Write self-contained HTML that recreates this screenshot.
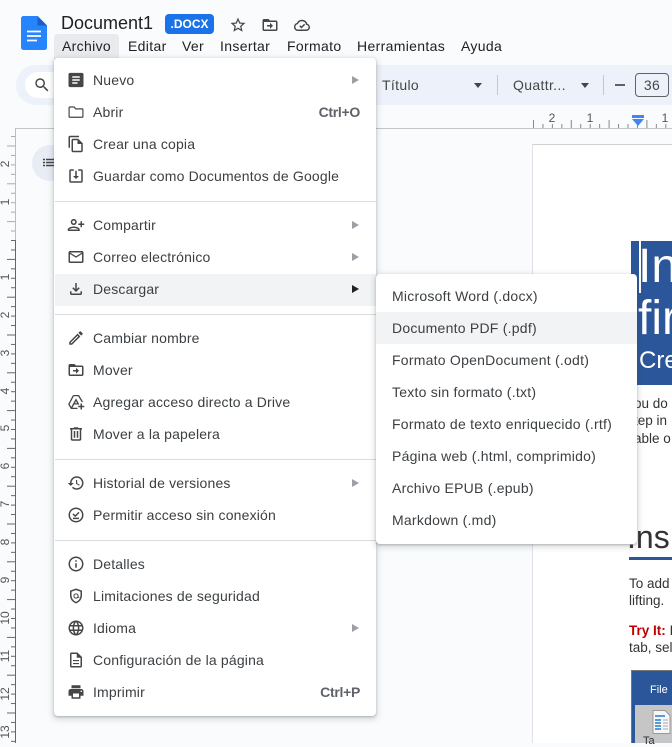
<!DOCTYPE html>
<html><head><meta charset="utf-8"><style>
html,body{margin:0;padding:0}
body{width:672px;height:743px;overflow:hidden;position:relative;background:#f9fbfd;font-family:"Liberation Sans",sans-serif;color:#3c4043}
.a{position:absolute;white-space:nowrap}
.b{position:absolute;white-space:nowrap;font-size:14px;line-height:20px;letter-spacing:.34px;color:#202124}
.t{position:absolute;left:93px;white-space:nowrap;font-size:14px;line-height:20px;letter-spacing:.17px;color:#3c4043}
.s{position:absolute;left:392px;white-space:nowrap;font-size:14px;line-height:20px;letter-spacing:.24px;color:#3c4043}
.i{position:absolute;left:67px;width:18px;height:18px;fill:#444746}
.st{fill:none;stroke:#444746;stroke-width:2}
.d{position:absolute;left:55px;width:321px;height:1px;background:#dadce0}
.r{position:absolute;left:352px;width:0;height:0;border-left:7px solid #9aa0a6;border-top:4px solid transparent;border-bottom:4px solid transparent}
.k{position:absolute;right:312px;font-size:14px;line-height:20px;font-weight:bold;color:#5f6368;letter-spacing:-.3px}
.w{position:absolute;white-space:nowrap;color:#333;font-size:13.5px;line-height:17px}
</style></head><body>

<!-- doc page -->
<div class="a" style="left:532px;top:144px;width:140px;height:599px;background:#fff;border-left:1px solid #e0e2e6;border-top:1px solid #d0d0d0;box-sizing:border-box"></div>
<div class="a" style="left:631px;top:241px;width:41px;height:144px;background:#2b579a"></div>
<div class="a" style="left:639px;top:241px;width:2px;height:52px;background:#fff"></div>
<div class="a" style="left:638px;top:239px;color:#fff;font-size:48px;line-height:56px">In</div>
<div class="a" style="left:638px;top:291px;color:#fff;font-size:48px;line-height:56px">fir</div>
<div class="a" style="left:639px;top:346px;color:#fff;font-size:24px;line-height:30px">Cre</div>
<div class="w" style="left:634px;top:395px">ou do</div>
<div class="w" style="left:634px;top:412px">tep in</div>
<div class="w" style="left:634px;top:430px">able o</div>
<div class="a" style="left:627px;top:517px;font-size:32px;line-height:40px;color:#333">.ns</div>
<div class="a" style="left:629px;top:557px;width:43px;height:3px;background:#2b579a"></div>
<div class="w" style="left:629px;top:575px">To add</div>
<div class="w" style="left:629px;top:592px">lifting.</div>
<div class="w" style="left:629px;top:622px;color:#c00000;font-weight:bold">Try It: <span style="color:#333;font-weight:normal">I</span></div>
<div class="w" style="left:629px;top:639px">tab, sel</div>
<div class="a" style="left:631px;top:670px;width:41px;height:73px;background:#2b579a;border-left:1px solid #777;border-top:1px solid #777;box-sizing:border-box"></div>
<div class="a" style="left:650px;top:684px;color:#fff;font-size:11px;line-height:12px">File</div>
<div class="a" style="left:635px;top:705px;width:37px;height:38px;background:#c6c6c6"></div>
<svg class="a" style="left:652px;top:710px" width="20" height="24" viewBox="0 0 20 24"><path d="M1 .5h12l5 5v18H1z" fill="#f6f6f6" stroke="#999"/><path d="M3 6h10M3 10h6M3 13h6M3 16h6M3 19h6" stroke="#5b9bd5" stroke-width="2"/><path d="M11 10h5M11 13h5M11 16h5M11 19h5" stroke="#aaa" stroke-width="1"/></svg>
<div class="a" style="left:643px;top:735px;font-size:11px;line-height:12px;color:#333">Ta</div>

<!-- rulers -->
<svg class="a" style="left:0;top:0" width="672" height="743" viewBox="0 0 672 743">
<defs>
<pattern id="pv" patternUnits="userSpaceOnUse" x="0" y="239" width="16" height="37.8">
<path d="M11 1.500h4.500M11 10.950h4.500M7 20.400h8.500M11 29.850h4.500" stroke="#666" stroke-width="1"/>
</pattern>
<pattern id="pl" patternUnits="userSpaceOnUse" x="0" y="239" width="16" height="37.8">
<path d="M11 1.500h4.500M11 10.950h4.500M7 20.400h8.500M11 29.850h4.500" stroke="#aaa" stroke-width="1"/>
</pattern>
<pattern id="ph" patternUnits="userSpaceOnUse" x="627" y="118" width="37.8" height="11">
<path d="M1 6v5M10.450 6v5M19.900 2v9M29.350 6v5" stroke="#888" stroke-width="1"/>
</pattern>
</defs>
<rect x="7" y="129" width="9" height="110" fill="url(#pl)"/>
<rect x="7" y="239" width="9" height="504" fill="url(#pv)"/>
<path d="M15.500 128V240" stroke="#bdbdbd"/><path d="M15.500 240V743" stroke="#666"/>
<path d="M15 128.500H672" stroke="#c4c6c8"/>
<rect x="530" y="118" width="142" height="10" fill="url(#ph)"/>
<g font-family="Liberation Sans" font-size="12" fill="#555" text-anchor="middle">
<text x="552" y="122">2</text><text x="590" y="122">1</text><text x="665" y="122">1</text>
<text transform="translate(9,164) rotate(-90)">2</text>
<text transform="translate(9,202) rotate(-90)">1</text>
<text transform="translate(9,277) rotate(-90)">1</text>
<text transform="translate(9,315) rotate(-90)">2</text>
<text transform="translate(9,353) rotate(-90)">3</text>
<text transform="translate(9,391) rotate(-90)">4</text>
<text transform="translate(9,428) rotate(-90)">5</text>
<text transform="translate(9,466) rotate(-90)">6</text>
<text transform="translate(9,504) rotate(-90)">7</text>
<text transform="translate(9,542) rotate(-90)">8</text>
<text transform="translate(9,580) rotate(-90)">9</text>
<text transform="translate(9,618) rotate(-90)">10</text>
<text transform="translate(9,656) rotate(-90)">11</text>
<text transform="translate(9,694) rotate(-90)">12</text>
<text transform="translate(9,732) rotate(-90)">13</text>
</g>
<path d="M632 115h12v3h-12z" fill="#4285f4"/><path d="M632 119h12l-6 7z" fill="#4285f4"/>
</svg>

<!-- outline button -->
<div class="a" style="left:32px;top:145px;width:36px;height:36px;border-radius:18px;background:#e8ecf5"></div>
<svg class="a" style="left:43px;top:158px" width="12" height="10"><path d="M0 1.500h2M3 1.500h9M0 4.500h2M3 4.500h9M0 7.500h2M3 7.500h9" stroke="#444" stroke-width="1.500"/></svg>

<!-- header -->
<svg class="a" style="left:21px;top:16px" width="26" height="34" viewBox="0 0 26 34"><path d="M16.500 0H2.500A2.500 2.500 0 0 0 0 2.500v29A2.500 2.500 0 0 0 2.500 34h21a2.500 2.500 0 0 0 2.500-2.500V9.500z" fill="#2684fc"/><path d="M16.500 0v9.500H26z" fill="#1a5fc8"/><path d="M6 15.500h14M6 20h14M6 24.500h10" stroke="#fff" stroke-width="1.800"/></svg>
<div class="a" style="left:61px;top:12px;font-size:18px;line-height:22px;color:#1f1f1f">Document1</div>
<div class="a" style="left:165px;top:14px;width:49px;height:20px;background:#1a73e8;border-radius:4px;color:#fff;font-size:12px;font-weight:bold;line-height:20px;text-align:center">.DOCX</div>
<svg class="a" style="left:229px;top:16px" width="18" height="18" viewBox="0 0 24 24"><path fill="#444746" d="M22 9.240l-7.190-.62L12 2 9.190 8.630 2 9.240l5.460 4.730L5.820 21 12 17.270 18.180 21l-1.630-7.030L22 9.240zM12 15.400l-3.760 2.270 1-4.280-3.320-2.880 4.380-.38L12 6.100l1.710 4.040 4.380.38-3.320 2.880 1 4.280L12 15.400z"/></svg>
<svg class="a" style="left:261px;top:16px" width="18" height="18" viewBox="0 0 24 24"><path fill="#444746" d="M20 6h-8l-2-2H4c-1.100 0-1.990.9-1.990 2L2 18c0 1.100.9 2 2 2h16c1.100 0 2-.9 2-2V8c0-1.100-.9-2-2-2zm0 12H4V8h16v10zm-8-1l4-4-4-4v3H8v2h4v3z"/></svg>
<svg class="a" style="left:293px;top:16px" width="18" height="18" viewBox="0 0 24 24"><path fill="none" stroke="#444746" stroke-width="2" d="M6.500 19a4.500 4.500 0 0 1-.7-8.900A6.800 6.800 0 0 1 12 6a6.500 6.500 0 0 1 6.400 5.100A4 4 0 0 1 18 19z"/><path fill="none" stroke="#444746" stroke-width="2" d="M9 13l2.300 2.300L15.500 11"/></svg>

<div class="a" style="left:54px;top:34px;width:65px;height:26px;background:#e8eaed;border-radius:4px 4px 0 0"></div>
<div class="b" style="left:62px;top:36px">Archivo</div>
<div class="b" style="left:128px;top:36px">Editar</div>
<div class="b" style="left:182px;top:36px">Ver</div>
<div class="b" style="left:220px;top:36px">Insertar</div>
<div class="b" style="left:287px;top:36px">Formato</div>
<div class="b" style="left:357px;top:36px">Herramientas</div>
<div class="b" style="left:461px;top:36px">Ayuda</div>

<!-- toolbar -->
<div class="a" style="left:16px;top:65px;width:680px;height:40px;border-radius:20px;background:#edf2fa"></div>
<div class="a" style="left:25px;top:72px;width:60px;height:26px;border-radius:13px;background:#fff"></div>
<svg class="a" style="left:33px;top:76px" width="18" height="18" viewBox="0 0 24 24"><path fill="#444746" d="M15.500 14h-.79l-.28-.27A6.470 6.470 0 0 0 16 9.500 6.500 6.500 0 1 0 9.500 16c1.610 0 3.090-.59 4.230-1.570l.27.28v.79l5 4.990L20.490 19l-4.990-5zm-6 0C7.010 14 5 11.990 5 9.500S7.010 5 9.500 5 14 7.010 14 9.500 11.990 14 9.500 14z"/></svg>
<div class="b" style="left:382px;top:75px;color:#444746">Título</div>
<div class="a" style="left:474px;top:83px;border-top:5px solid #444746;border-left:4px solid transparent;border-right:4px solid transparent"></div>
<div class="a" style="left:497px;top:75px;width:1px;height:20px;background:#c7c7c7"></div>
<div class="b" style="left:513px;top:75px;color:#444746">Quattr...</div>
<div class="a" style="left:581px;top:83px;border-top:5px solid #444746;border-left:4px solid transparent;border-right:4px solid transparent"></div>
<div class="a" style="left:603px;top:75px;width:1px;height:20px;background:#c7c7c7"></div>
<div class="a" style="left:615px;top:84px;width:10px;height:2px;background:#5f6368"></div>
<div class="a" style="left:635px;top:73px;width:34px;height:24px;border:1px solid #5f6368;border-radius:4px;box-sizing:border-box;text-align:center;font-size:14px;line-height:22px;color:#444746;letter-spacing:.4px">36</div>

<!-- main menu -->
<div class="a" style="left:54px;top:58px;width:322px;height:658px;background:#fff;border-radius:4px;box-shadow:0 2px 6px 2px rgba(60,64,67,.15),0 1px 2px rgba(60,64,67,.3)"></div>
<div class="a" style="left:55px;top:274px;width:321px;height:32px;background:#f1f3f4"></div>

<svg class="i" style="top:71px" viewBox="0 0 24 24"><path fill-rule="evenodd" d="M20 2.500H4c-1.100 0-2 .9-2 2v15c0 1.100.9 2 2 2h16c1.100 0 2-.9 2-2v-15c0-1.100-.9-2-2-2zM14 17H7v-2h7v2zm3-4H7v-2h10v2zm0-4H7V7h10v2z"/></svg>
<div class="t" style="top:70px">Nuevo</div><div class="r" style="top:76px"></div>
<svg class="i" style="top:103px" viewBox="0 0 24 24"><path d="M2.800 6.300a1 1 0 0 1 1-1h5.700l2 2.500h8.700a1 1 0 0 1 1 1V18a1 1 0 0 1-1 1H3.800a1 1 0 0 1-1-1z" class="st" style="stroke-width:1.600"/></svg>
<div class="t" style="top:102px">Abrir</div><div class="k" style="top:102px">Ctrl+O</div>
<svg class="i" style="top:135px" viewBox="0 0 24 24"><path d="M16 1H4c-1.100 0-2 .9-2 2v14h2V3h12V1zm-1 4H8c-1.100 0-1.990.9-1.990 2L6 21c0 1.100.89 2 1.990 2H19c1.100 0 2-.9 2-2V11l-6-6zM8 21V7h6v5h5v9H8z"/></svg>
<div class="t" style="top:134px">Crear una copia</div>
<svg class="i" style="top:167px" viewBox="0 0 24 24"><path d="M19 3h-4v2h4v14H5V5h4V3H5c-1.100 0-2 .9-2 2v14c0 1.100.9 2 2 2h14c1.100 0 2-.9 2-2V5c0-1.100-.9-2-2-2z"/><path d="M11 5h2v7h3l-4 4-4-4h3z"/></svg>
<div class="t" style="top:166px">Guardar como Documentos de Google</div>
<div class="d" style="top:201px"></div>

<svg class="i" style="top:216px" viewBox="0 0 24 24"><path transform="matrix(-1 0 0 1 24 0)" d="M15 12c2.210 0 4-1.790 4-4s-1.790-4-4-4-4 1.790-4 4 1.790 4 4 4zm0-6c1.100 0 2 .9 2 2s-.9 2-2 2-2-.9-2-2 .9-2 2-2zm0 8c-2.670 0-8 1.340-8 4v2h16v-2c0-2.660-5.330-4-8-4zm-6 4c.22-.72 3.310-2 6-2 2.700 0 5.800 1.290 6 2H9zm-3-3v-3h3v-2H6V7H4v3H1v2h3v3h2z"/></svg>
<div class="t" style="top:215px">Compartir</div><div class="r" style="top:221px"></div>
<svg class="i" style="top:248px" viewBox="0 0 24 24"><path d="M22 6c0-1.100-.9-2-2-2H4c-1.100 0-2 .9-2 2v12c0 1.100.9 2 2 2h16c1.100 0 2-.9 2-2V6zm-2 0l-8 5-8-5h16zm0 12H4V8l8 5 8-5v10z"/></svg>
<div class="t" style="top:247px">Correo electrónico</div><div class="r" style="top:253px"></div>
<svg class="i" style="top:280px" viewBox="0 0 24 24"><path d="M18 15v3H6v-3H4v3c0 1.100.9 2 2 2h12c1.100 0 2-.9 2-2v-3h-2zm-1-4l-1.410-1.410L13 12.170V4h-2v8.170L8.410 9.590 7 11l5 5 5-5z"/></svg>
<div class="t" style="top:279px">Descargar</div><div class="r" style="top:285px;border-left-color:#202124"></div>
<div class="d" style="top:314px"></div>

<svg class="i" style="top:329px" viewBox="0 0 24 24"><path d="M14.060 9.020l.92.92L5.920 19H5v-.92l9.060-9.060M17.660 3c-.25 0-.51.1-.7.29l-1.830 1.830 3.750 3.750 1.830-1.830c.39-.39.39-1.020 0-1.410l-2.340-2.340c-.2-.2-.45-.29-.71-.29zm-3.600 3.190L3 17.250V21h3.750L17.810 9.940l-3.750-3.750z"/></svg>
<div class="t" style="top:328px">Cambiar nombre</div>
<svg class="i" style="top:361px" viewBox="0 0 24 24"><path d="M20 6h-8l-2-2H4c-1.100 0-1.990.9-1.990 2L2 18c0 1.100.9 2 2 2h16c1.100 0 2-.9 2-2V8c0-1.100-.9-2-2-2zm0 12H4V8h16v10zm-8-1l4-4-4-4v3H8v2h4v3z"/></svg>
<div class="t" style="top:360px">Mover</div>
<svg class="i" style="top:393px" viewBox="0 0 24 24"><path d="M8.500 3.500h7L20.500 12M8.500 3.500L2.500 15l3.200 5.500H14M5.700 20.500L12 9l3 5.500H9" class="st" style="stroke-width:1.800"/><path d="M18 14v3h-3v2h3v3h2v-3h3v-2h-3v-3z"/></svg>
<div class="t" style="top:392px">Agregar acceso directo a Drive</div>
<svg class="i" style="top:425px" viewBox="0 0 24 24"><path d="M15 4V3H9v1H4v2h1v13c0 1.100.9 2 2 2h10c1.100 0 2-.9 2-2V6h1V4h-5zm2 15H7V6h10v13zM9 8h2v9H9zm4 0h2v9h-2z"/></svg>
<div class="t" style="top:424px">Mover a la papelera</div>
<div class="d" style="top:459px"></div>

<svg class="i" style="top:474px" viewBox="0 0 24 24"><path d="M13 3c-4.970 0-9 4.030-9 9H1l3.890 3.890.07.14L9 12H6c0-3.870 3.130-7 7-7s7 3.130 7 7-3.130 7-7 7c-1.930 0-3.680-.79-4.940-2.060l-1.420 1.420C8.270 19.990 10.510 21 13 21c4.970 0 9-4.030 9-9s-4.030-9-9-9zm-1 5v5l4.280 2.540.72-1.210-3.500-2.080V8H12z"/></svg>
<div class="t" style="top:473px">Historial de versiones</div><div class="r" style="top:479px"></div>
<svg class="i" style="top:506px" viewBox="0 0 24 24"><circle cx="12" cy="12" r="9" class="st"/><path d="M8 10.500l3 3 5-5M8 16.500h8" class="st"/></svg>
<div class="t" style="top:505px">Permitir acceso sin conexión</div>
<div class="d" style="top:540px"></div>

<svg class="i" style="top:555px" viewBox="0 0 24 24"><path d="M11 7h2v2h-2zm0 4h2v6h-2zm1-9C6.480 2 2 6.480 2 12s4.480 10 10 10 10-4.480 10-10S17.520 2 12 2zm0 18c-4.410 0-8-3.590-8-8s3.590-8 8-8 8 3.590 8 8-3.590 8-8 8z"/></svg>
<div class="t" style="top:554px">Detalles</div>
<svg class="i" style="top:587px" viewBox="0 0 24 24"><path d="M12 3l7 2.600v5.600c0 4.500-3 8.300-7 9.700-4-1.400-7-5.200-7-9.700V5.600z" class="st"/><circle cx="12" cy="12" r="2.800" class="st" style="stroke-width:1.400"/><path d="M14.800 10.500v2.500c0 1 1 1.200 1.500.6" class="st" style="stroke-width:1.200"/></svg>
<div class="t" style="top:586px">Limitaciones de seguridad</div>
<svg class="i" style="top:619px" viewBox="0 0 24 24"><path d="M11.990 2C6.470 2 2 6.480 2 12s4.470 10 9.990 10C17.520 22 22 17.520 22 12S17.520 2 11.990 2zm6.930 6h-2.950c-.32-1.250-.78-2.450-1.380-3.560 1.840.63 3.370 1.910 4.330 3.560zM12 4.040c.83 1.200 1.480 2.530 1.910 3.960h-3.820c.43-1.430 1.080-2.760 1.910-3.960zM4.260 14C4.100 13.360 4 12.690 4 12s.1-1.360.26-2h3.380c-.08.66-.14 1.320-.14 2s.06 1.340.14 2H4.260zm.82 2h2.950c.32 1.250.78 2.450 1.380 3.560-1.840-.63-3.370-1.900-4.330-3.560zm2.950-8H5.080c.96-1.660 2.490-2.930 4.330-3.560C8.810 5.550 8.350 6.750 8.030 8zM12 19.960c-.83-1.200-1.480-2.530-1.910-3.960h3.820c-.43 1.430-1.080 2.760-1.910 3.960zM14.340 14H9.660c-.09-.66-.16-1.320-.16-2s.07-1.350.16-2h4.680c.09.65.16 1.320.16 2s-.07 1.340-.16 2zm.25 5.560c.6-1.110 1.060-2.310 1.380-3.560h2.950c-.96 1.650-2.490 2.930-4.330 3.560zM16.360 14c.08-.66.14-1.320.14-2s-.06-1.340-.14-2h3.380c.16.64.26 1.310.26 2s-.1 1.360-.26 2h-3.380z"/></svg>
<div class="t" style="top:618px">Idioma</div><div class="r" style="top:624px"></div>
<svg class="i" style="top:651px" viewBox="0 0 24 24"><path d="M14 2H6c-1.100 0-1.990.9-1.990 2L4 20c0 1.100.89 2 1.990 2H18c1.100 0 2-.9 2-2V8l-6-6zM6 20V4h7v5h5v11H6z"/><path d="M8 12h8v1.500H8zM8 16h8v1.500H8z"/></svg>
<div class="t" style="top:650px">Configuración de la página</div>
<svg class="i" style="top:683px" viewBox="0 0 24 24"><path d="M19 8H5c-1.660 0-3 1.340-3 3v6h4v4h12v-4h4v-6c0-1.660-1.340-3-3-3zm-3 11H8v-5h8v5zm3-7c-.55 0-1-.45-1-1s.45-1 1-1 1 .45 1 1-.45 1-1 1zm-1-9H6v4h12V3z"/></svg>
<div class="t" style="top:682px">Imprimir</div><div class="k" style="top:682px">Ctrl+P</div>

<!-- submenu -->
<div class="a" style="left:376px;top:274px;width:261px;height:270px;background:#fff;border-radius:4px;box-shadow:0 2px 6px 2px rgba(60,64,67,.15),0 1px 2px rgba(60,64,67,.3)"></div>
<div class="a" style="left:376px;top:312px;width:261px;height:32px;background:#f1f3f4"></div>
<div class="s" style="top:286px">Microsoft Word (.docx)</div>
<div class="s" style="top:318px">Documento PDF (.pdf)</div>
<div class="s" style="top:350px">Formato OpenDocument (.odt)</div>
<div class="s" style="top:382px">Texto sin formato (.txt)</div>
<div class="s" style="top:414px">Formato de texto enriquecido (.rtf)</div>
<div class="s" style="top:446px">Página web (.html, comprimido)</div>
<div class="s" style="top:478px">Archivo EPUB (.epub)</div>
<div class="s" style="top:510px">Markdown (.md)</div>
</body></html>
